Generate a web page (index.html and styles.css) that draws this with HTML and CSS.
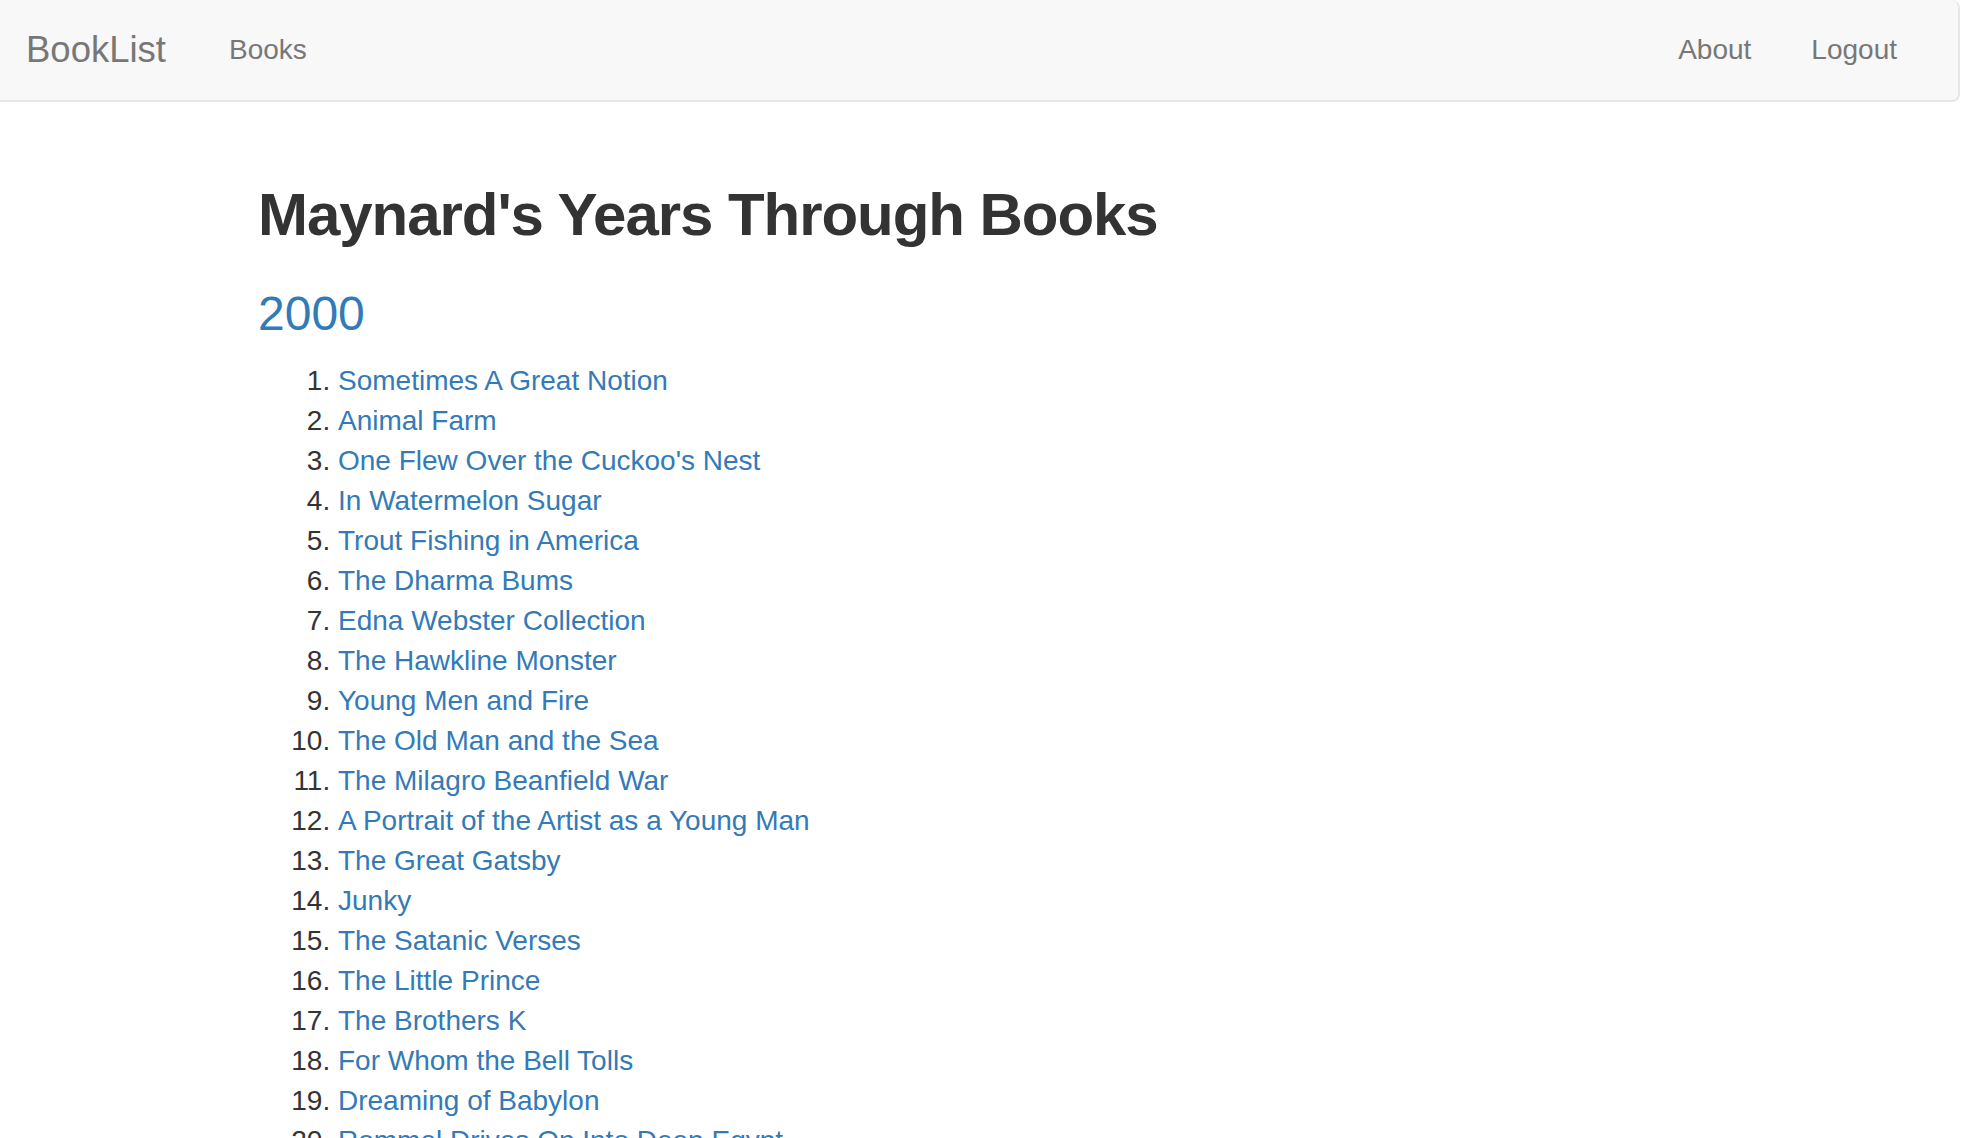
FILE: index.html
```html
<!DOCTYPE html>
<html lang="en">
<head>
<meta charset="utf-8">
<title>BookList</title>
<link rel="stylesheet" href="styles.css">
</head>
<body>
<nav class="navbar">
  <a class="brand" href="#">BookList</a>
  <ul class="nav">
    <li><a href="#">Books</a></li>
  </ul>
  <ul class="nav nav-right">
    <li><a href="#">About</a></li>
    <li><a href="#">Logout</a></li>
  </ul>
</nav>
<main class="container">
  <h2 class="title">Maynard's Years Through Books</h2>
  <h3 class="year"><a href="#">2000</a></h3>
  <ol class="books">
    <li><a href="#">Sometimes A Great Notion</a></li>
    <li><a href="#">Animal Farm</a></li>
    <li><a href="#">One Flew Over the Cuckoo's Nest</a></li>
    <li><a href="#">In Watermelon Sugar</a></li>
    <li><a href="#">Trout Fishing in America</a></li>
    <li><a href="#">The Dharma Bums</a></li>
    <li><a href="#">Edna Webster Collection</a></li>
    <li><a href="#">The Hawkline Monster</a></li>
    <li><a href="#">Young Men and Fire</a></li>
    <li><a href="#">The Old Man and the Sea</a></li>
    <li><a href="#">The Milagro Beanfield War</a></li>
    <li><a href="#">A Portrait of the Artist as a Young Man</a></li>
    <li><a href="#">The Great Gatsby</a></li>
    <li><a href="#">Junky</a></li>
    <li><a href="#">The Satanic Verses</a></li>
    <li><a href="#">The Little Prince</a></li>
    <li><a href="#">The Brothers K</a></li>
    <li><a href="#">For Whom the Bell Tolls</a></li>
    <li><a href="#">Dreaming of Babylon</a></li>
    <li><a href="#">Rommel Drives On Into Deep Egypt</a></li>
  </ol>
</main>
</body>
</html>
```

FILE: styles.css
```css
html {
  scrollbar-width: none;
}
body {
  margin: 0;
  background: #fff;
  color: #333;
  font-family: "Liberation Sans", Arial, sans-serif;
  font-size: 28px;
  line-height: 40px;
}
a {
  color: #337ab7;
  text-decoration: none;
}

.navbar {
  display: flex;
  align-items: stretch;
  box-sizing: border-box;
  height: 102px;
  width: 1960px;
  background: #f8f8f8;
  border-right: 2px solid #e7e7e7;
  border-bottom: 2px solid #e7e7e7;
  border-radius: 0 8px 8px 0;
  padding-right: 31px;
  margin-bottom: 40px;
}
.brand {
  padding: 30px 33px 30px 26px;
  font-size: 36.5px;
  line-height: 40px;
  color: #777;
}
.nav {
  display: flex;
  list-style: none;
  margin: 0;
  padding: 0;
}
.nav a {
  display: block;
  padding: 30px;
  line-height: 40px;
  color: #777;
}
.nav-right {
  margin-left: auto;
}

.container {
  display: flow-root;
  width: 1500px;
  margin: 0 0 0 calc(50% - 753px);
  padding: 0 30px;
  box-sizing: border-box;
}
.title {
  margin: 40px 0 20px;
  font-size: 60px;
  line-height: 1.1;
  font-weight: 700;
  letter-spacing: -1.05px;
  color: #333;
}
.year {
  margin: 40px 0 20px;
  font-size: 48px;
  line-height: 1.1;
  font-weight: 400;
}
.books {
  margin: 0 0 20px;
  padding-left: 80px;
}
```
